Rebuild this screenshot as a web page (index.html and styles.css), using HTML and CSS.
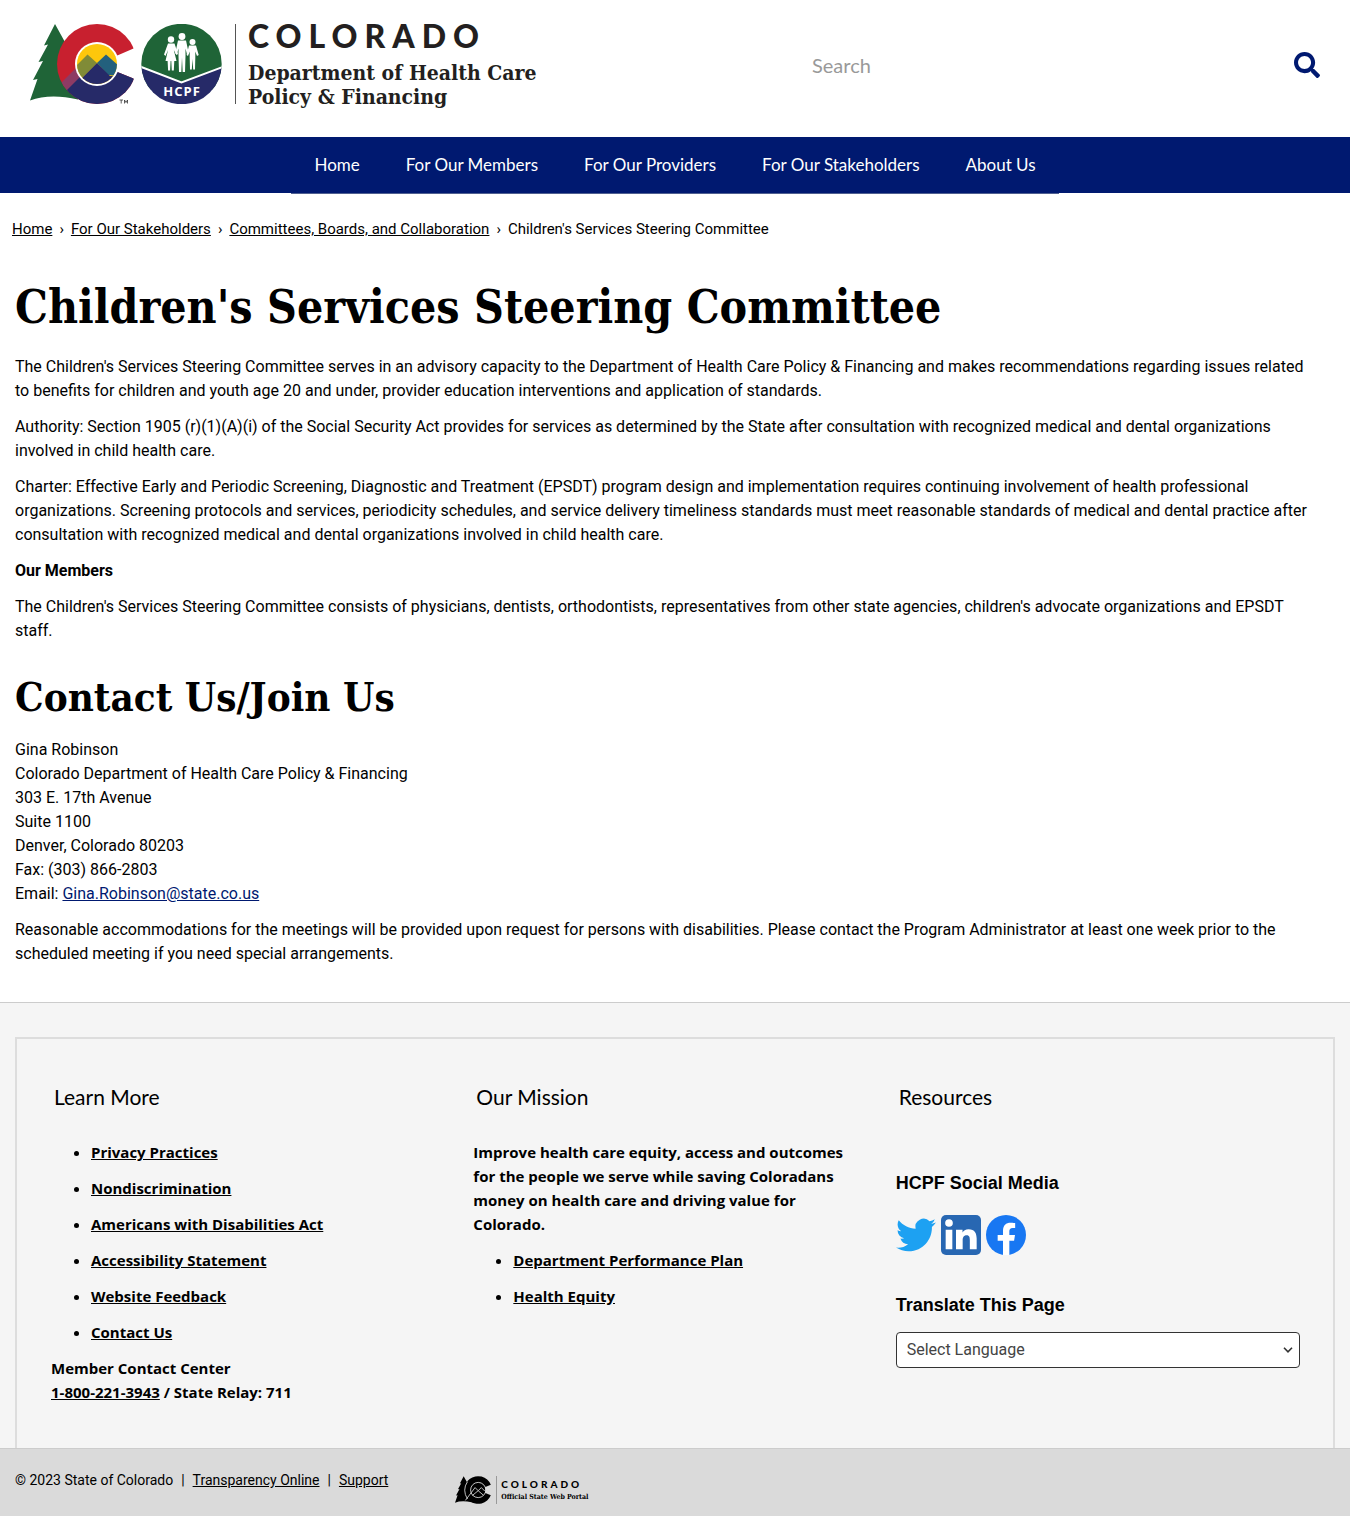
FILE: index.html
```html
<!DOCTYPE html>
<html lang="en">
<head>
<meta charset="utf-8">
<meta name="viewport" content="width=device-width, initial-scale=1">
<title>Children's Services Steering Committee | Colorado Department of Health Care Policy &amp; Financing</title>
<link rel="stylesheet" href="styles.css">
</head>
<body>
<header class="site-header">
  <a class="brand" href="#">
    <svg class="brand-mark" viewBox="30 24 192 80" width="192" height="80" aria-hidden="true">
      <path fill="#1f6437" d="M55 24L44 45.500L48 44.500L38.500 62L43 61L33 80L37.500 79L30 100.500Q50 93 78 99.500L80 60L66 44Z"/>
      <clipPath id="c-shape"><path d="M97 64L115 56.500L133.500 48.500L133.500 20H50V108H133.500V78.500L115 71Z"/></clipPath>
      <g clip-path="url(#c-shape)">
        <circle cx="97" cy="64" r="40" fill="#c8202f"/>
        <clipPath id="c-round"><circle cx="97" cy="64" r="40"/></clipPath>
        <g clip-path="url(#c-round)">
          <path fill="#8d3b64" d="M56 88L80 64L88 72L62 98Z"/>
          <path fill="#262a68" d="M60 97L97 60L140 70V110H60Z"/>
        </g>
      </g>
      <circle cx="97" cy="64" r="22" fill="#fff"/>
      <clipPath id="disc"><circle cx="97" cy="64" r="20"/></clipPath>
      <g clip-path="url(#disc)">
        <path fill="#fdc70c" d="M70 40H120V90H70Z"/>
        <path fill="#808b37" d="M75 67L87.500 54.500L97 63L80 80L70 74Z"/>
        <path fill="#23607d" d="M97 63L106 54.500L120 67V76L108 75Z"/>
        <path fill="#262a68" d="M97 63L79 81V90H118V76L110 76Z"/>
      </g>
      <path fill="none" stroke="#333" stroke-width=".8" d="M119.500 100H123M121.200 100V103.500M124.500 103.500V100L126 102.500L127.500 100V103.500"/>
      <clipPath id="seal"><circle cx="181.500" cy="64" r="40.200"/></clipPath>
      <g clip-path="url(#seal)">
        <path fill="#1f6437" d="M140 20H224V90H140Z"/>
        <path fill="#262a68" d="M140 67L181.500 83L224 67V108H140Z"/>
        <path fill="none" stroke="#fff" stroke-width="2" d="M140 66.500L181.500 82.500L224 66.500"/>
      </g>
      <g fill="#fff">
        <circle cx="171" cy="39.500" r="3.200"/>
        <path d="M168 43.500H174.500L178 54L176.500 55L173.800 50L176.500 61H174.300L173.800 70.500H171.800L171.300 61H170.600L170.100 70.500H168.100L167.600 61H165.500L168 50L165.500 56L164 54.500Z"/>
        <circle cx="182" cy="36.500" r="3.400"/>
        <path d="M178 40.500H186L188.800 53.500L187 54.500L185.500 48.500V56L185 72H182.700L182 57.500L181.300 72H179L178.500 56V48.500L176.800 54.500L175.200 53.500Z"/>
        <circle cx="192.500" cy="42" r="3"/>
        <path d="M189 45.500H196L198.700 55L197 56L195.300 51.500V58L195 69.500H193.200L192.500 59L191.800 69.500H190L189.700 58V51.500L188 56L186.600 55Z"/>
      </g>
      <text class="seal-text" x="182" y="96" text-anchor="middle">HCPF</text>
    </svg>
    <span class="brand-text">
      <span class="brand-state">COLORADO</span>
      <span class="brand-dept">Department of Health Care<br>Policy &amp; Financing</span>
    </span>
  </a>
  <form class="search" role="search">
    <input class="search-input" type="search" placeholder="Search" aria-label="Search">
    <button class="search-button" type="button" aria-label="Search">
      <svg viewBox="0 0 512 512" width="26" height="26" aria-hidden="true"><path fill="#001970" d="M505 442.700L405.300 343c-4.500-4.500-10.600-7-17-7H372c27.600-35.300 44-79.700 44-128C416 93.100 322.900 0 208 0S0 93.100 0 208s93.100 208 208 208c48.300 0 92.700-16.400 128-44v16.300c0 6.400 2.500 12.500 7 17l99.700 99.700c9.400 9.400 24.600 9.400 33.900 0l28.300-28.300c9.400-9.400 9.400-24.600.1-34zM208 336c-70.700 0-128-57.200-128-128 0-70.700 57.200-128 128-128 70.700 0 128 57.200 128 128 0 70.700-57.200 128-128 128z"/></svg>
    </button>
  </form>
</header>

<nav class="main-nav" aria-label="Main">
  <ul class="nav-list">
    <li><a href="#">Home</a></li>
    <li><a href="#">For Our Members</a></li>
    <li><a href="#">For Our Providers</a></li>
    <li><a href="#">For Our Stakeholders</a></li>
    <li><a href="#">About Us</a></li>
  </ul>
</nav>

<nav class="breadcrumb" aria-label="Breadcrumb">
  <a href="#">Home</a><span>›</span><a href="#">For Our Stakeholders</a><span>›</span><a href="#">Committees, Boards, and Collaboration</a><span>›</span><span class="current">Children's Services Steering Committee</span>
</nav>

<main class="content">
  <h1>Children's Services Steering Committee</h1>
  <p>The Children's Services Steering Committee serves in an advisory capacity to the Department of Health Care Policy &amp; Financing and makes recommendations regarding issues related to benefits for children and youth age 20 and under, provider education interventions and application of standards.</p>
  <p>Authority: Section 1905 (r)(1)(A)(i) of the Social Security Act provides for services as determined by the State after consultation with recognized medical and dental organizations involved in child health care.</p>
  <p>Charter: Effective Early and Periodic Screening, Diagnostic and Treatment (EPSDT) program design and implementation requires continuing involvement of health professional organizations. Screening protocols and services, periodicity schedules, and service delivery timeliness standards must meet reasonable standards of medical and dental practice after consultation with recognized medical and dental organizations involved in child health care.</p>
  <p><strong>Our Members</strong></p>
  <p>The Children's Services Steering Committee consists of physicians, dentists, orthodontists, representatives from other state agencies, children's advocate organizations and EPSDT staff.</p>
  <h2>Contact Us/Join Us</h2>
  <p>Gina Robinson<br>Colorado Department of Health Care Policy &amp; Financing<br>303 E. 17th Avenue<br>Suite 1100<br>Denver, Colorado 80203<br>Fax: (303) 866-2803<br>Email: <a href="#">Gina.Robinson@state.co.us</a></p>
  <p>Reasonable accommodations for the meetings will be provided upon request for persons with disabilities. Please contact the Program Administrator at least one week prior to the scheduled meeting if you need special arrangements.</p>
</main>

<footer>
  <div class="footer-top">
    <div class="footer-box">
      <section class="footer-col">
        <h2>Learn More</h2>
        <ul>
          <li><a href="#">Privacy Practices</a></li>
          <li><a href="#">Nondiscrimination</a></li>
          <li><a href="#">Americans with Disabilities Act</a></li>
          <li><a href="#">Accessibility Statement</a></li>
          <li><a href="#">Website Feedback</a></li>
          <li><a href="#">Contact Us</a></li>
        </ul>
        <p>Member Contact Center<br><a href="#">1-800-221-3943</a> / State Relay: 711</p>
      </section>
      <section class="footer-col">
        <h2>Our Mission</h2>
        <p class="mission">Improve health care equity, access and outcomes for the people we serve while saving Coloradans money on health care and driving value for Colorado.</p>
        <ul>
          <li><a href="#">Department Performance Plan</a></li>
          <li><a href="#">Health Equity</a></li>
        </ul>
      </section>
      <section class="footer-col resources">
        <h2>Resources</h2>
        <h3>HCPF Social Media</h3>
        <div class="social">
          <a href="#" aria-label="Twitter"><svg viewBox="0 0 24 24" width="40" height="40"><path fill="#1da1f2" d="M23.950 4.570a10 10 0 0 1-2.820.770 4.960 4.960 0 0 0 2.160-2.720c-.950.550-2 .950-3.130 1.180a4.920 4.920 0 0 0-8.380 4.480C7.690 8.100 4.070 6.130 1.640 3.160a4.820 4.820 0 0 0-.670 2.480c0 1.710.870 3.210 2.190 4.100a4.900 4.900 0 0 1-2.230-.620v.060a4.920 4.920 0 0 0 3.950 4.830 5 5 0 0 1-2.210.080 4.940 4.940 0 0 0 4.600 3.420A9.870 9.870 0 0 1 0 19.540a13.990 13.990 0 0 0 7.550 2.210c9.050 0 14-7.500 14-13.980 0-.210 0-.420-.020-.630a9.940 9.940 0 0 0 2.420-2.570z"/></svg></a>
          <a href="#" aria-label="LinkedIn"><svg viewBox="0 0 24 24" width="40" height="40"><rect width="24" height="24" rx="3" fill="#2867b2"/><path fill="#fff" d="M2.800 8.800h4v11.800h-4zM4.800 2.500a2.300 2.300 0 1 1 0 4.600 2.300 2.300 0 0 1 0-4.600zM9 8.800h3.900v1.700c.6-1 1.800-2 3.600-2 3.800 0 4.900 2.400 4.900 5.600v6.500h-4.100V15c0-1.300-.1-2.900-1.900-2.900s-2.400 1.400-2.400 2.900v5.600H9z"/></svg></a>
          <a href="#" aria-label="Facebook"><svg viewBox="0 0 24 24" width="40" height="40"><circle cx="12" cy="12" r="12" fill="#1877f2"/><path fill="#fff" d="M10.200 24v-8.500H7V12h3.200V9.300c0-3.100 1.800-4.700 4.600-4.700 1.300 0 2.700.200 2.700.200v3h-1.500c-1.500 0-2 .900-2 1.900V12h3.400l-.550 3.500H14V24z"/></svg></a>
        </div>
        <h3><label for="language">Translate This Page</label></h3>
        <div class="select-wrap">
          <select id="language"><option>Select Language</option></select>
          <svg class="chevron" viewBox="0 0 10 6" width="10" height="6" aria-hidden="true"><path fill="none" stroke="#333" stroke-width="1.600" d="M1 .8L5 4.800L9 .8"/></svg>
        </div>
      </section>
    </div>
  </div>
  <div class="footer-bottom">
    <div class="legal">© 2023 State of Colorado<span>|</span><a href="#">Transparency Online</a><span>|</span><a href="#">Support</a></div>
    <a class="portal" href="#">
      <svg viewBox="30 24 104 80" width="36" height="28" aria-hidden="true">
        <path d="M55 24L44 45.500L48 44.500L38.500 62L43 61L33 80L37.500 79L30 100.500Q50 93 78 99.500L80 60L66 44Z"/>
        <path d="M133.500 48.500A40 40 0 1 0 133.500 79.500L116 72A20 20 0 1 1 116 56Z"/>
        <circle cx="97" cy="64" r="21"/>
        <circle cx="97" cy="64" r="22" fill="none" stroke="#dadada" stroke-width="2.500"/>
        <path fill="none" stroke="#dadada" stroke-width="2.500" d="M66 40Q50 64 66 90M60 94L88 57L97 66L106 57L116 67M80 80L97 66L112 79"/>
      </svg>
      <span class="portal-text"><span class="portal-state">COLORADO</span><span class="portal-name">Official State Web Portal</span></span>
    </a>
  </div>
</footer>
</body>
</html>
```
FILE: styles.css
```css
* { box-sizing: border-box; }

body {
  margin: 0;
  background: #fff;
  color: #000;
  font-family: Roboto, "Liberation Sans", sans-serif;
  font-size: 16px;
  line-height: 24px;
}

a { color: inherit; }
ul { margin: 0; padding: 0; }

/* Header */
.site-header {
  display: flex;
  align-items: flex-start;
  justify-content: space-between;
  padding: 24px 30px 28px;
}
.brand {
  display: flex;
  color: #231f20;
  text-decoration: none;
}
.seal-text {
  fill: #fff;
  font: bold 13px "Open Sans", sans-serif;
  letter-spacing: 1px;
}
.brand-text { position: relative; padding-left: 26px; }
.brand-text::before {
  content: "";
  position: absolute;
  left: 13px;
  top: 0;
  width: 1px;
  height: 80px;
  background: #555;
}
.brand-state {
  display: block;
  font: 900 32px/24px Lato, sans-serif;
  letter-spacing: 7px;
}
.brand-dept {
  display: block;
  margin-top: 13px;
  font: bold 21px/24px "DejaVu Serif Condensed", "DejaVu Serif", serif;
}
.search {
  display: flex;
  flex: 0 1 508px;
  align-items: center;
  height: 82px;
}
.search-input {
  flex: 1;
  min-width: 0;
  padding: 0;
  border: 0;
  outline: 0;
  background: none;
  font: 20px/24px Lato, sans-serif;
}
.search-input::placeholder { color: #999; opacity: 1; }
.search-button {
  display: flex;
  padding: 0;
  border: 0;
  background: none;
}

/* Navigation */
.main-nav {
  display: flex;
  justify-content: center;
  height: 56px;
  background: #001970;
}
.nav-list {
  display: flex;
  height: 57px;
  border-bottom: 1px solid #506090;
  list-style: none;
}
.nav-list a {
  display: block;
  padding: 16px 23px;
  color: #fff;
  font: 17px/24px Lato, sans-serif;
  text-decoration: none;
}
.breadcrumb {
  display: flex;
  flex-wrap: wrap;
  gap: 7px;
  padding: 24px 12px;
  font-size: 15px;
}

/* Main content */
.content { padding: 14px 38px 24px 15px; }
.content p { margin: 0 0 12px; }
.content a { color: #001970; }
h1, .content h2 { font-family: "DejaVu Serif Condensed", "DejaVu Serif", serif; font-weight: bold; }
h1 { margin: 0 0 19px; font-size: 46px; line-height: 57px; }
.content h2 { margin: 30px 0 18px; font-size: 40px; line-height: 47px; }

/* Footer */
.footer-top {
  padding: 34px 15px 0;
  border-top: 1px solid #ccc;
  background: #f5f5f5;
}
.footer-box {
  display: grid;
  grid-template-columns: repeat(3, 1fr);
  gap: 18px;
  padding: 46px 33px 44px 34px;
  border: 2px solid #ddd;
  border-bottom: 0;
  font: bold 15px/24px "Open Sans", sans-serif;
}
.footer-col h2 {
  margin: 0 3px 31px;
  font: 21px/24px Lato, sans-serif;
}
.footer-col ul { padding-left: 40px; }
.footer-col li { margin-bottom: 12px; }
.footer-col p { margin: 0 0 12px; }
.footer-col p:last-child { margin: 0; }
.mission { padding-right: 20px; }
.resources h3 {
  margin: 0;
  font: bold 18px/24px "Liberation Sans", sans-serif;
}
.resources h2 { margin-bottom: 62px; }
.social { display: flex; gap: 5px; margin: 20px 0 38px; }
.social a, .social svg { display: block; }
.select-wrap { position: relative; margin-top: 15px; }
.select-wrap select {
  display: block;
  width: 100%;
  height: 36px;
  padding: 0 30px 0 10px;
  border: 1px solid #333;
  border-radius: 4px;
  appearance: none;
  background: #fff;
  color: #444;
  font: 16px/24px Roboto, sans-serif;
}
.chevron { position: absolute; right: 7px; top: 15px; }

.footer-bottom {
  display: flex;
  gap: 67px;
  padding: 19px 15px 12px;
  border-top: 1px solid #ccc;
  background: #dadada;
  font-size: 14px;
}
.legal span { margin: 0 8px; }
.portal {
  display: flex;
  padding-top: 8px;
  color: #000;
  text-decoration: none;
}
.portal-text {
  display: flex;
  flex-direction: column;
  margin-left: 5px;
  padding-left: 4px;
  border-left: 1px solid #999;
}
.portal-state { font: 900 10px/16px Lato, sans-serif; letter-spacing: 3px; }
.portal-name { font: bold 7px/10px "DejaVu Serif Condensed", serif; }
```
